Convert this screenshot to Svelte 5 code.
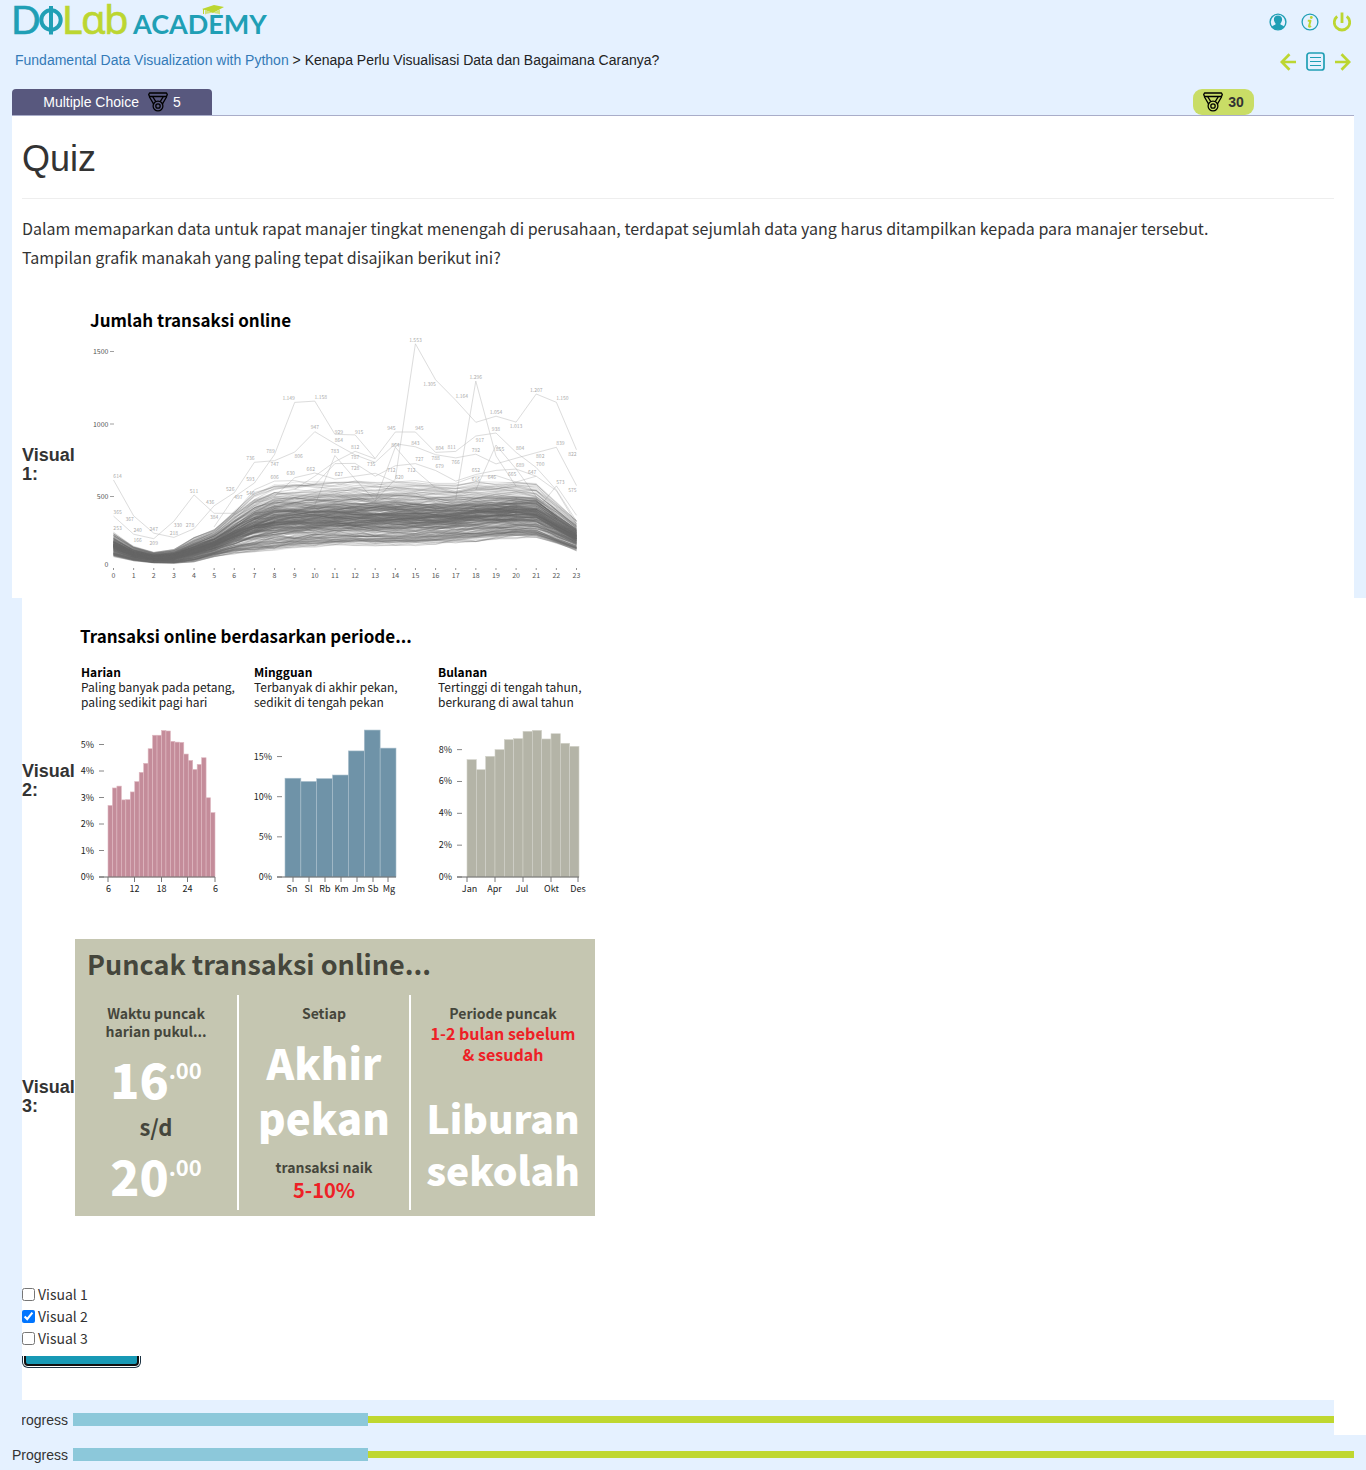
<script>
  // Deterministic pseudo random numbers, so the chart is stable between renders.
  let seed = 7;
  function rnd() {
    seed = (seed * 16807) % 2147483647;
    return seed / 2147483647;
  }
  const gauss = () => (rnd() + rnd() + rnd() + rnd()) / 2 - 1;

  const hours = Array.from({ length: 24 }, (_, i) => i);
  const hx = (h) => 38.5 + 20.13 * h;
  const vy = (v) => 263 - 0.145 * v;

  const low = [251, 255, 257, 257.5, 256, 251, 248, 247, 245, 243, 242, 241, 240, 240, 240, 240, 239, 237, 236, 234, 233, 233, 239, 245];
  const high = [226, 240, 246, 243, 231, 223, 204, 186, 177, 176, 175, 175, 175, 176, 175, 176, 177, 178, 175, 176, 175, 177, 196, 214];

  function bandLine(t, wobble) {
    let drift = 0;
    return hours
      .map((h) => {
        drift = drift * 0.7 + gauss() * wobble;
        let k = Math.abs(t + drift);
        if (k > 1) k = 2 - k;
        return hx(h).toFixed(1) + ',' + (low[h] + (high[h] - low[h]) * k).toFixed(1);
      })
      .join(' ');
  }

  const band = [];
  for (let i = 0; i < 220; i++) band.push({ pts: bandLine(0.44 + gauss() * 0.5, 0.13), o: 0.25 + rnd() * 0.35 });
  for (let i = 0; i < 70; i++) band.push({ pts: bandLine(rnd(), 0.12), o: 0.15 + rnd() * 0.25 });
  for (let i = 0; i < 40; i++) band.push({ pts: bandLine(0.6 + rnd() * 0.38, 0.12), o: 0.15 + rnd() * 0.25 });
  for (let i = 0; i < 26; i++) band.push({ pts: bandLine(0.06 + rnd() * 0.12, 0.03), o: 0.35 });

  const outliers = [
    { from: 0, v: [614, 367, 247, 218, 278, 436, 526, 736, 747, 806, 947, 864, 787, 735, 864, 843, 788, 766, 792, 725, 764, 802, 839, 575] },
    { from: 0, v: [365, 240, 209, 330, 511, 384, 384, 546, 606, 610, 580, 727, 728, 640, 712, 727, 679, 606, 652, 680, 689, 640, 540, 310] },
    { from: 5, v: [290, 497, 593, 789, 1149, 1158, 929, 925, 762, 945, 945, 804, 811, 917, 938, 804, 700, 545, 330] },
    { from: 13, v: [470, 620, 1553, 1305, 1164, 1012, 1054, 1013, 1207, 1150, 822] },
    { from: 17, v: [480, 1296, 780, 570] },
    { from: 10, v: [440, 783, 620, 470, 840, 680, 560] },
    { from: 8, v: [500, 630, 662, 620, 640, 660, 600, 610, 590, 590, 640, 645, 600, 640] },
    { from: 18, v: [545, 855, 690, 500] },
    { from: 21, v: [400, 573, 370] },
    { from: 9, v: [550, 640, 740, 812, 760] }
  ].map((s) => ({
    pts: s.v.map((v, i) => hx(s.from + i).toFixed(1) + ',' + vy(v).toFixed(1)).join(' ')
  }));

  const marks = [
    [0.2, 614, '614'], [0.2, 365, '365'], [0.2, 253, '253'], [0.8, 315, '367'], [1.2, 240, '240'], [1.2, 170, '166'], [2, 247, '247'],
    [2, 150, '209'], [3.2, 276, '330'], [3, 218, '218'], [3.8, 278, '278'], [4, 511, '511'], [4.8, 436, '436'], [5, 330, '384'],
    [5.8, 526, '526'], [6.2, 472, '497'], [6.8, 593, '593'], [6.8, 495, '546'], [6.8, 736, '736'], [7.8, 789, '789'], [8, 695, '747'],
    [8, 606, '606'], [8.7, 1149, '1.149'], [9.2, 752, '806'], [8.8, 635, '630'], [10.3, 1162, '1.158'], [10, 950, '947'], [9.8, 662, '662'],
    [11.2, 920, '929'], [11.2, 864, '864'], [11, 783, '783'], [11.2, 630, '627'], [12.2, 918, '915'], [12, 815, '812'], [12, 742, '787'],
    [12, 670, '728'], [12.8, 700, '735'], [13.8, 945, '945'], [14, 830, '864'], [13.8, 655, '712'], [14.2, 610, '620'], [15.2, 945, '945'],
    [15, 1555, '1.553'], [15, 843, '843'], [15.2, 730, '727'], [14.8, 655, '712'], [15.7, 1250, '1.305'], [16.2, 804, '804'],
    [16, 735, '788'], [16.2, 680, '679'], [17.3, 1168, '1.164'], [16.8, 811, '811'], [17, 712, '766'], [18, 1296, '1.296'], [18.2, 862, '917'],
    [18, 795, '792'], [18, 652, '652'], [18, 592, '616'], [19, 1058, '1.054'], [19, 938, '938'], [19.2, 803, '855'], [18.8, 610, '646'],
    [20, 960, '1.013'], [20.2, 804, '804'], [20.2, 689, '689'], [19.8, 630, '665'], [21, 1207, '1.207'], [21.2, 753, '802'],
    [21.2, 700, '700'], [20.8, 640, '647'], [22.3, 1152, '1.150'], [22.2, 839, '839'], [22.2, 573, '573'], [22.8, 765, '822'], [22.8, 520, '575']
  ];

  const charts = [
    {
      name: 'Harian', lines: ['Paling banyak pada petang,', 'paling sedikit pagi hari'], left: 6, color: '#c48c9a', edge: '#dfb9c2',
      x0: 33, x1: 140, tick: 24, per: 26.5,
      yl: [0, 1, 2, 3, 4, 5],
      xl: [['6', 33.5], ['12', 59.5], ['18', 86.5], ['24', 112.5], ['6', 140.5]],
      xt: [33, 59.5, 86.5, 112.5, 140],
      v: [2.7, 3.36, 3.43, 2.91, 2.92, 3.21, 3.6, 3.95, 4.29, 4.84, 5.35, 5.35, 5.53, 5.51, 5.12, 5.09, 5.08, 4.64, 4.4, 4.06, 4.25, 4.5, 2.99, 2.43]
    },
    {
      name: 'Mingguan', lines: ['Terbanyak di akhir pekan,', 'sedikit di tengah pekan'], left: 179, color: '#6f93a8', edge: '#a9bfcc',
      x0: 210, x1: 321, tick: 202, per: 8.03,
      yl: [0, 5, 10, 15],
      xl: [['Sn', 217], ['Sl', 233.5], ['Rb', 250], ['Km', 266.5], ['Jm', 283.5], ['Sb', 298], ['Mg', 314]],
      xt: [218, 234, 250, 266, 282, 298, 313],
      v: [12.3, 11.9, 12.25, 12.7, 15.7, 18.3, 16.05]
    },
    {
      name: 'Bulanan', lines: ['Tertinggi di tengah tahun,', 'berkurang di awal tahun'], left: 363, color: '#b4b4a7', edge: '#d3d3ca',
      x0: 392, x1: 504, tick: 382, per: 15.92,
      yl: [0, 2, 4, 6, 8],
      xl: [['Jan', 394.5], ['Apr', 419.5], ['Jul', 447], ['Okt', 476.5], ['Des', 503]],
      xt: [392, 420, 448, 476, 503],
      v: [7.37, 6.74, 7.58, 8, 8.63, 8.69, 9.15, 9.21, 8.67, 9, 8.4, 8.21]
    }
  ];
  const base = 255;

  let options = $state([
    { id: 'v1', label: 'Visual 1', checked: false },
    { id: 'v2', label: 'Visual 2', checked: true },
    { id: 'v3', label: 'Visual 3', checked: false }
  ]);
</script>

{#snippet medal()}
  <svg class="medal" viewBox="0 0 20 20" aria-hidden="true">
    <g fill="none" stroke="#000" stroke-width="1.3" stroke-linejoin="round">
      <path d="M1.5 1h17l.8 1.6-.9 1.9H1.6L.7 2.6z" />
      <path d="M1.2 4.5 5.8 12.4M4.6 4.5l3.2 5.2M18.8 4.5l-4.6 7.9M15.4 4.5l-3.2 5.2" />
      <circle cx="10" cy="14" r="4.9" />
      <circle cx="10" cy="14" r="2.2" />
    </g>
  </svg>
{/snippet}

{#snippet progress(value)}
  <span>Progress</span>
  <div class="track" role="progressbar" aria-label="Progress" aria-valuenow={value} aria-valuemin="0" aria-valuemax="100">
    <div class="fill" style="width: {value}%"></div>
  </div>
{/snippet}

<div class="top">
  <header class="bar brand">
    <a href="#home" aria-label="DQLab Academy">
      <svg class="logo" width="252" height="44" viewBox="0 0 252 44">
        <g class="mark">
          <text class="teal" x="-4" y="34">D</text>
          <ellipse cx="36" cy="20" rx="9.700" ry="9.700" fill="none" stroke="#209fb5" stroke-width="4" />
          <path d="M36 6v28.500" stroke="#209fb5" stroke-width="4" />
          <text class="lime" x="47" y="34">L</text>
          <text class="lime round" x="66" y="34">ɑ</text>
          <text class="lime round" x="89" y="34">b</text>
        </g>
        <text class="academy" x="118" y="34">ACADEMY</text>
        <path d="m187 9 12-4 10 2-11 6z" fill="#bcd631" />
        <path d="M190 10v4.500c4-2 10-2 15 0v-5l-7 3.500z" fill="#cfe07a" />
        <path d="M188.500 9v5" stroke="#bcd631" stroke-width="1" />
      </svg>
    </a>
    <nav class="icons wide">
      <a href="#profile" aria-label="Profile">
        <svg width="18" height="18" viewBox="0 0 18 18">
          <circle cx="9" cy="9" r="7.900" fill="none" stroke="#209fb5" stroke-width="1.400" />
          <path d="M9 2.500c2.900 0 4.200 1.900 4.100 4.200-.1 1.600-.9 2.800-1.600 3.500v1.300l3.600 1.700A7.300 7.300 0 0 1 9 16.600a7.300 7.300 0 0 1-6.100-3.400l3.600-1.700v-1.300C5.800 9.500 5 8.300 4.900 6.700 4.800 4.400 6.100 2.500 9 2.500z" fill="#209fb5" />
        </svg>
      </a>
      <a href="#info" aria-label="Info">
        <svg width="18" height="18" viewBox="0 0 18 18">
          <circle cx="9" cy="9" r="7.900" fill="none" stroke="#209fb5" stroke-width="1.300" />
          <circle cx="10.300" cy="4.500" r="1.400" fill="#bcd631" />
          <path d="M6.800 7.700h2.700L8 13.300c0 .8 1.200.5 2-.2" fill="none" stroke="#bcd631" stroke-width="2" stroke-linejoin="round" />
        </svg>
      </a>
      <a href="#logout" aria-label="Log out">
        <svg width="18" height="20" viewBox="0 0 18 20">
          <path d="M4.200 4.300a7.700 7.700 0 1 0 9.600 0M9 .5V11" fill="none" stroke="#bcd631" stroke-width="2.800" />
        </svg>
      </a>
    </nav>
  </header>

  <div class="bar crumbs">
    <div><a href="#course">Fundamental Data Visualization with Python</a> &gt; Kenapa Perlu Visualisasi Data dan Bagaimana Caranya?</div>
    <nav class="icons pager">
      <a href="#prev" aria-label="Previous">
        <svg width="16" height="18" viewBox="0 0 16 18"><path d="M9.500 1.200 1.800 9l7.700 7.800M1.500 9H16" fill="none" stroke="#bcd631" stroke-width="2.700" /></svg>
      </a>
      <a href="#contents" aria-label="Contents">
        <svg width="19" height="19" viewBox="0 0 19 19">
          <rect x="1" y="1" width="17" height="17" rx="2.500" fill="none" stroke="#209fb5" stroke-width="1.700" />
          <path d="M4 5.500h11M4 9.500h11M4 13.500h11" stroke="#209fb5" stroke-width="1.200" />
        </svg>
      </a>
      <a href="#next" aria-label="Next">
        <svg width="16" height="18" viewBox="0 0 16 18"><path d="M6.500 1.200 14.200 9l-7.700 7.800M14.500 9H0" fill="none" stroke="#bcd631" stroke-width="2.700" /></svg>
      </a>
    </nav>
  </div>

  <div class="tabs">
    <div class="tab"><span>Multiple Choice</span>{@render medal()}<span>5</span></div>
    <div class="score">{@render medal()}<b>30</b></div>
  </div>

  <main class="panel">
    <h1>Quiz</h1>
    <hr />
    <p>
      Dalam memaparkan data untuk rapat manajer tingkat menengah di perusahaan, terdapat sejumlah data yang harus ditampilkan kepada para manajer tersebut.<br />
      Tampilan grafik manakah yang paling tepat disajikan berikut ini?
    </p>
    <div class="visual first">
      <h4>Visual 1:</h4>
      <svg width="520" height="292" viewBox="0 0 520 292" role="img" aria-label="Jumlah transaksi online">
        <text class="title" x="15" y="21">Jumlah transaksi online</text>
        {#each [[0, 262], [500, 190.5], [1000, 118], [1500, 45.5]] as [v, y]}
          <text class="axis" x="33.500" y={y - (v ? 0 : 4) + 2.5} text-anchor="end">{v}</text>
          {#if v}<path d="M35 {y}h4" stroke="#888" stroke-width="0.800" />{/if}
        {/each}
        {#each hours as h}
          <path d="M{hx(h)} 262v2" stroke="#777" stroke-width="0.800" />
          <text class="axis" x={hx(h)} y="272" text-anchor="middle">{h}</text>
        {/each}
        <g fill="none" stroke="#666" stroke-width="0.500">
          {#each band as l}
            <polyline points={l.pts} opacity={l.o} />
          {/each}
        </g>
        <g fill="none" stroke="#777" stroke-width="0.500" opacity="0.500">
          {#each outliers as l}
            <polyline points={l.pts} />
          {/each}
        </g>
        {#each marks as [h, v, t]}
          <text class="mark-label" x={hx(h)} y={vy(v) - 2} text-anchor="middle">{t}</text>
        {/each}
      </svg>
    </div>
  </main>
</div>

<div class="rest">
  <div class="visual">
    <h4>Visual 2:</h4>
    <svg width="520" height="292" viewBox="0 0 520 292" role="img" aria-label="Transaksi online berdasarkan periode">
      <text class="title" x="5" y="21">Transaksi online berdasarkan periode...</text>
      {#each charts as c}
        {@const w = (c.x1 - c.x0) / c.v.length}
        <text class="name" x={c.left} y="55">{c.name}</text>
        <text class="desc" x={c.left} y="70">{c.lines[0]}</text>
        <text class="desc" x={c.left} y="85">{c.lines[1]}</text>
        {#each c.v as v, i}
          <rect x={c.x0 + i * w} y={base - v * c.per} width={w} height={v * c.per} fill={c.color} stroke={c.edge} stroke-width="0.600" />
        {/each}
        {#each c.yl as y}
          <text class="tick" x={c.tick - 5} y={base - y * c.per + 3} text-anchor="end">{y}%</text>
          <path d="M{c.tick} {base - y * c.per}h5" stroke="#888" />
        {/each}
        <path d="M{c.tick} {base}H{c.x1}" stroke="#666" />
        {#each c.xt as x}
          <path d="M{x} {base}v5" stroke="#777" />
        {/each}
        {#each c.xl as [t, x]}
          <text class="tick" {x} y="270" text-anchor="middle">{t}</text>
        {/each}
      {/each}
    </svg>
  </div>

  <div class="visual">
    <h4>Visual 3:</h4>
    <section class="peak">
      <h2>Puncak transaksi online...</h2>
      <div class="cols">
        <div>
          <div class="small">Waktu puncak<br />harian pukul...</div>
          <div class="clock start">16<sup>.00</sup></div>
          <div class="until">s/d</div>
          <div class="clock">20<sup>.00</sup></div>
        </div>
        <div>
          <div class="small">Setiap</div>
          <div class="big weekend">Akhir<br />pekan</div>
          <div class="small">transaksi naik</div>
          <div class="rise">5-10%</div>
        </div>
        <div>
          <div class="small">Periode puncak</div>
          <div class="red">1-2 bulan sebelum<br />&amp; sesudah</div>
          <div class="big holiday">Liburan<br />sekolah</div>
        </div>
      </div>
    </section>
  </div>

  <form class="answers">
    {#each options as o}
      <div class="option">
        <input type="checkbox" id={o.id} bind:checked={o.checked} />
        <label for={o.id}>{o.label}</label>
      </div>
    {/each}
    <div class="clip"><button type="button" aria-label="Submit"></button></div>
  </form>
</div>

<div class="progress inner">{@render progress(23.4)}</div>
<div class="progress">{@render progress(23)}</div>

<style>
  :global(body) {
    margin: 0;
    background: #fff;
    color: #333;
    font: 14px/20px 'Liberation Sans', Arial, sans-serif;
  }
  .top {
    background: #e5f1ff;
    padding: 0 12px;
  }
  .bar {
    display: flex;
    justify-content: space-between;
    align-items: center;
    padding: 0 3px;
  }
  .brand { height: 44px; }
  .crumbs {
    height: 32px;
    margin-bottom: 13px;
    color: #222;
  }
  .crumbs div a {
    color: #337ab7;
    text-decoration: none;
  }
  .bar svg { display: block; }
  .logo { overflow: visible; }
  .mark text {
    font-family: Lato, sans-serif;
    font-size: 39px;
    stroke-width: 0.6px;
  }
  .mark text.round {
    font-family: 'Noto Sans', sans-serif;
    font-size: 40px;
  }
  .teal { fill: #209fb5; stroke: #209fb5; }
  .lime { fill: #bcd631; stroke: #bcd631; }
  .academy {
    font: bold 27px Lato, sans-serif;
    fill: #209fb5;
  }
  .icons {
    display: flex;
    align-items: center;
    gap: 10px;
  }
  .icons.wide { gap: 14px; }
  .icons.pager { padding-top: 3px; }

  .tabs {
    display: flex;
    justify-content: space-between;
    padding-right: 100px;
  }
  .tab, .score {
    display: flex;
    align-items: center;
    justify-content: center;
    height: 26px;
    gap: 5px;
  }
  .tab {
    width: 200px;
    background: #58587e;
    color: #fff;
    border-radius: 4px 4px 0 0;
  }
  .tab .medal { margin-left: 4px; }
  .score {
    width: 61px;
    background: #c9dd66;
    border-radius: 9px;
  }
  .medal {
    width: 20px;
    height: 20px;
  }

  .panel {
    background: #fff;
    border-top: 1px solid #a9adc9;
    padding: 23px 20px 0 10px;
  }
  h1 {
    margin: 0;
    font-size: 36px;
    line-height: 40px;
    font-weight: 500;
  }
  hr {
    margin: 19px 0 15px;
    border: 0;
    border-top: 1px solid #eee;
  }
  p {
    margin: 0 0 34px;
    font: 16px/29px 'Noto Sans CJK SC', sans-serif;
  }
  .visual {
    display: flex;
    align-items: flex-start;
    min-height: 316px;
  }
  .visual.first { min-height: 0; }
  h4 {
    width: 53px;
    margin: 140px 0 0;
    font-size: 18px;
    line-height: 19px;
  }
  .visual svg {
    display: block;
    font-family: 'Noto Sans CJK SC', sans-serif;
  }
  .title {
    font-size: 17px;
    font-weight: 700;
    fill: #000;
  }
  .axis {
    font-size: 7px;
    fill: #555;
  }
  .mark-label {
    font-size: 5px;
    fill: #aaa;
  }
  .name {
    font-size: 12px;
    font-weight: 700;
    fill: #000;
  }
  .desc {
    font-size: 12px;
    fill: #222;
  }
  .tick {
    font-size: 9px;
    fill: #222;
  }

  .rest {
    border-left: 22px solid #e5f1ff;
    padding: 24px 0 32px;
  }
  .peak {
    width: 520px;
    margin-top: 1px;
    padding-bottom: 6px;
    background: #c5c6b1;
    color: #45463c;
    font-family: 'Noto Sans CJK SC', sans-serif;
    font-weight: 700;
  }
  .peak h2 {
    margin: 0 0 6px 12px;
    font-size: 27px;
    line-height: 50px;
  }
  .cols {
    display: grid;
    grid-template-columns: 162px 172px 1fr;
    text-align: center;
  }
  .cols > div {
    height: 206px;
    padding-top: 9px;
  }
  .cols > div + div { border-left: 2px solid #fff; }
  .small {
    font-size: 14px;
    line-height: 18px;
  }
  .clock {
    color: #fff;
    font-size: 48px;
    font-weight: 900;
    line-height: 72px;
  }
  .clock.start { margin-top: 2px; }
  .clock sup {
    font-size: 22px;
    font-weight: 700;
    line-height: 0;
    vertical-align: 20px;
  }
  .until {
    font-size: 22px;
    line-height: 25px;
  }
  .big {
    color: #fff;
    font-size: 42px;
    font-weight: 900;
  }
  .weekend {
    margin: 12px 0 14px;
    line-height: 55px;
  }
  .holiday {
    margin-top: 26px;
    font-size: 39px;
    line-height: 52px;
  }
  .red, .rise { color: #ee2026; }
  .red {
    margin-top: 1px;
    font-size: 16px;
    line-height: 21px;
  }
  .rise {
    font-size: 20px;
    line-height: 28px;
  }

  .answers { margin-top: 29px; }
  .option {
    display: flex;
    align-items: center;
    gap: 3px;
    font: 14px/22px 'Noto Sans CJK SC', sans-serif;
  }
  .option input {
    width: 13px;
    height: 13px;
    margin: 0;
  }
  .clip {
    display: flex;
    align-items: flex-end;
    width: 119px;
    height: 12px;
    margin-top: 7px;
    overflow: hidden;
  }
  .clip button {
    flex: 1;
    height: 34px;
    margin: 0 2px 2px;
    background: #1899b5;
    border: 2px solid #101010;
    border-radius: 4px;
    box-shadow: 0 0 0 1px #fff, 0 0 0 2px #1c3344;
  }

  .progress {
    display: flex;
    align-items: center;
    height: 35px;
    padding: 4px 12px 0;
    box-sizing: border-box;
    gap: 5px;
    background: #e5f1ff;
  }
  .progress.inner {
    margin-right: 32px;
    padding-right: 0;
  }
  .progress.inner span { clip-path: inset(0 0 0 10px); }
  .track {
    flex: 1;
    height: 13px;
    background: linear-gradient(#bfd730, #bfd730) center / 100% 7px no-repeat;
  }
  .fill {
    height: 100%;
    background: #8cc8da;
  }
</style>
